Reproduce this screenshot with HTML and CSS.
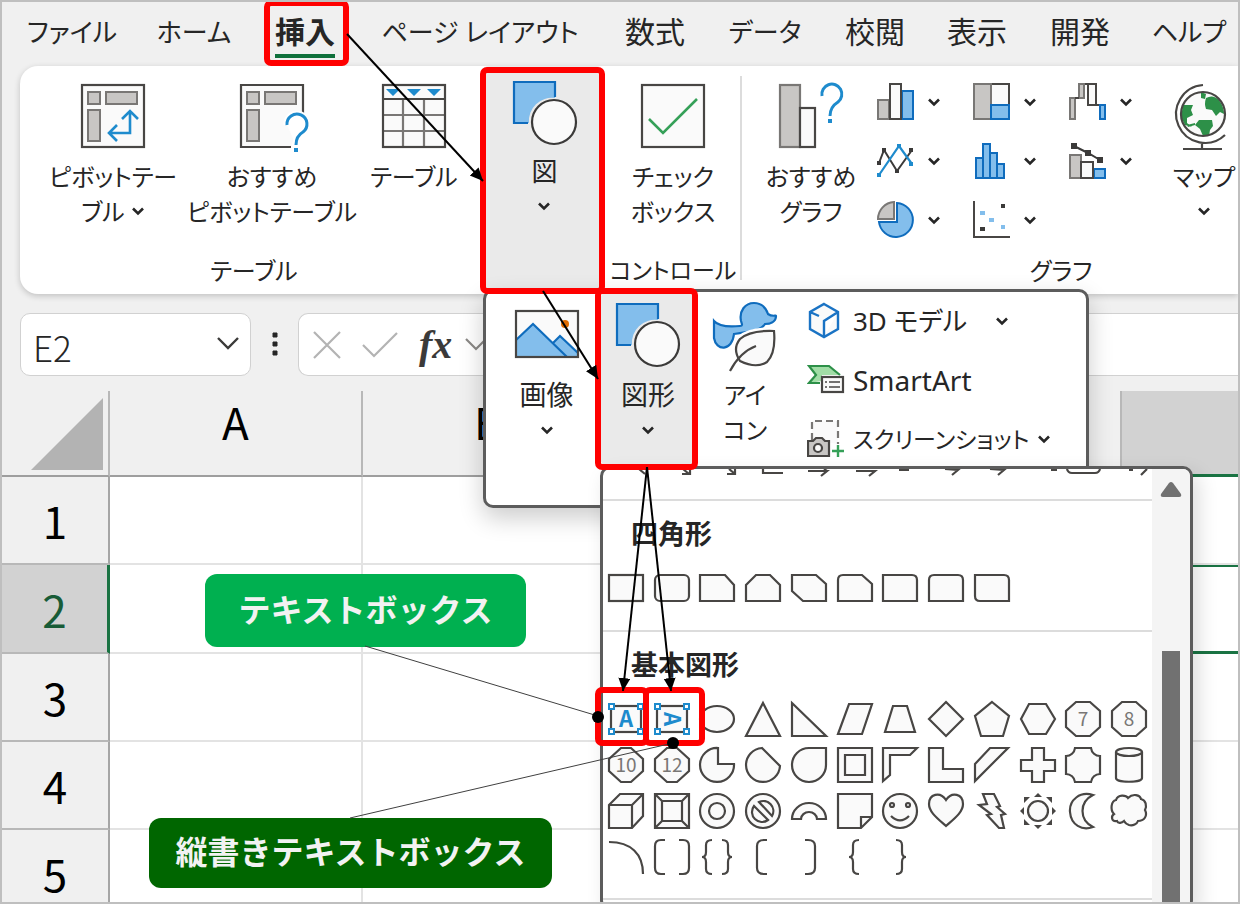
FILE: index.html
```html
<!DOCTYPE html>
<html lang="ja">
<head>
<meta charset="utf-8">
<title>テキストボックスの挿入</title>
<link rel="stylesheet" href="styles.css">
</head>
<body>
<svg class="defs" aria-hidden="true">
  <symbol id="chev" viewBox="0 0 14 10"><path d="M2 2.500 7 7.500 12 2.500" fill="none" stroke="#262626" stroke-width="2.600"/></symbol>
  <symbol id="shapes" viewBox="0 0 66 66">
    <path d="M2 2H43V18A23 23 0 0 0 17 43H2Z" fill="#83beec"/>
    <path d="M43 17V2H2V43H16" fill="none" stroke="#0f6cbd" stroke-width="2.200"/>
    <circle cx="42" cy="42" r="22" fill="#fafafa" stroke="#3b3a39" stroke-width="2.200"/>
  </symbol>
</svg>
<div class="app">
  <nav class="tabs">
    <a href="#" class="kana">ファイル</a><a href="#" class="kana">ホーム</a><a href="#" class="on"><span>挿入</span></a><a href="#" class="kana">ページ レイアウト</a><a href="#">数式</a><a href="#" class="kana">データ</a><a href="#">校閲</a><a href="#">表示</a><a href="#">開発</a><a href="#" class="kana">ヘルプ</a>
  </nav>

  <section class="ribbon">
    <div class="group g-table">
      <div class="items">
        <button class="big w-pivot">
          <svg width="66" height="68" viewBox="0 0 66 68"><rect x="2" y="2" width="62" height="62" fill="#fafafa" stroke="#484644" stroke-width="2.200"/><g fill="#c8c6c4" stroke="#797775" stroke-width="2"><rect x="8" y="9" width="12" height="12"/><rect x="26" y="9" width="31" height="12"/><rect x="8" y="27" width="12" height="31"/></g><path d="M50 28V50H30M42 36 50 28 58 36M37 42 29 50 37 58" fill="none" stroke="#1e8bcd" stroke-width="2.600"/></svg>
          <span>ピボットテー<br>ブル <svg class="chev"><use href="#chev"/></svg></span>
        </button>
        <button class="big w-rec">
          <svg width="66" height="72" viewBox="0 0 66 72"><path d="M64 30V2H2V64H52" fill="#fafafa" stroke="#484644" stroke-width="2.200"/><g fill="#c8c6c4" stroke="#797775" stroke-width="2"><rect x="8" y="9" width="12" height="12"/><rect x="26" y="9" width="31" height="12"/><rect x="8" y="27" width="12" height="31"/></g><path d="M48 42A10 10 0 1 1 64 49Q57 53 57 62" fill="#fff" stroke="#fff" stroke-width="7"/><path d="M48 42A10 10 0 1 1 64 49Q57 53 57 62" fill="none" stroke="#1e8bcd" stroke-width="3"/><rect x="55" y="65" width="4" height="4" fill="#1e8bcd"/></svg>
          <span>おすすめ<br>ピボットテーブル</span>
        </button>
        <button class="big w-tbl">
          <svg width="66" height="68" viewBox="0 0 66 68"><rect x="2" y="2" width="62" height="62" fill="#fafafa"/><path d="M22 16V64M43 16V64M2 32H64M2 48H64" stroke="#797775" stroke-width="2.200"/><path d="M2 16H64" stroke="#484644" stroke-width="2"/><rect x="2" y="2" width="62" height="62" fill="none" stroke="#484644" stroke-width="2.200"/><path d="M5 6H19L12 13ZM26 6H40L33 13ZM46 6H60L53 13Z" fill="#1e8bcd"/></svg>
          <span>テーブル</span>
        </button>
      </div>
      <h2>テーブル</h2>
    </div>
    <div class="group g-fig">
      <button class="big raised">
        <svg width="66" height="66"><use href="#shapes"/></svg>
        <span>図<br><svg class="chev"><use href="#chev"/></svg></span>
      </button>
    </div>
    <div class="group g-ctl">
      <div class="items">
        <button class="big">
          <svg width="66" height="68" viewBox="0 0 66 68"><rect x="2" y="2" width="62" height="62" fill="#fafafa" stroke="#484644" stroke-width="2.200"/><path d="M9 36 23 50 57 16" fill="none" stroke="#35a058" stroke-width="2.600"/></svg>
          <span>チェック<br>ボックス</span>
        </button>
      </div>
      <h2>コントロール</h2>
    </div>
    <div class="group g-chart">
      <div class="items">
        <button class="big w-graph">
          <svg width="66" height="68" viewBox="0 0 66 68"><rect x="2" y="2" width="20" height="62" fill="#c8c6c4" stroke="#797775" stroke-width="2.200"/><rect x="22" y="25" width="15" height="39" fill="#fafafa" stroke="#484644" stroke-width="2.200"/><path d="M44 13A10 10 0 1 1 60 19Q52 24 52 33" fill="none" stroke="#1e8bcd" stroke-width="3"/><rect x="50" y="36" width="4" height="4" fill="#1e8bcd"/></svg>
          <span>おすすめ<br>グラフ</span>
        </button>
        <div class="minis">
          <button aria-label="棒グラフ"><svg width="38" height="38" viewBox="0 0 38 38"><rect x="1" y="17" width="11" height="19" fill="#c8c6c4" stroke="#797775" stroke-width="2"/><rect x="25" y="8" width="11" height="28" fill="#83beec" stroke="#0f6cbd" stroke-width="2"/><rect x="13" y="1" width="11" height="35" fill="#fafafa" stroke="#484644" stroke-width="2"/></svg><svg class="chev"><use href="#chev"/></svg></button>
          <button aria-label="階層グラフ"><svg width="38" height="38" viewBox="0 0 38 38"><rect x="18" y="1" width="18" height="21" fill="#fafafa" stroke="#484644" stroke-width="2"/><rect x="1" y="1" width="17" height="35" fill="#c8c6c4" stroke="#797775" stroke-width="2"/><rect x="18" y="22" width="18" height="14" fill="#83beec" stroke="#0f6cbd" stroke-width="2"/></svg><svg class="chev"><use href="#chev"/></svg></button>
          <button aria-label="ウォーターフォール図"><svg width="38" height="38" viewBox="0 0 38 38"><path d="M11 1H27" stroke="#484644" stroke-width="2"/><g fill="#c8c6c4" stroke="#797775" stroke-width="2"><rect x="1" y="15" width="5" height="21"/><rect x="10" y="1" width="5" height="14"/></g><rect x="19" y="1" width="8" height="21" fill="#fafafa" stroke="#484644" stroke-width="2"/><path d="M6 15H10M27 22H31" stroke="#484644" stroke-width="2"/><rect x="31" y="22" width="5" height="14" fill="#83beec" stroke="#0f6cbd" stroke-width="2"/></svg><svg class="chev"><use href="#chev"/></svg></button>
          <button aria-label="折れ線グラフ"><svg width="38" height="38" viewBox="0 0 38 38"><path d="M2 21 7 8 20 29 35 8" fill="none" stroke="#3b3a39" stroke-width="2"/><path d="M2 33 22 4 35 22" fill="none" stroke="#1e8bcd" stroke-width="2.200"/><path d="M0 19H4V23H0ZM5 6H9V10H5ZM18 27H22V31H18ZM32 6H36V10H32Z" fill="#3b3a39"/><path d="M0 31H4V35H0ZM20 2H24V6H20ZM32 20H36V24H32Z" fill="#1e8bcd"/></svg><svg class="chev"><use href="#chev"/></svg></button>
          <button aria-label="統計グラフ"><svg width="38" height="38" viewBox="0 0 38 38"><g fill="#83beec" stroke="#0f6cbd" stroke-width="2"><rect x="3" y="16" width="7" height="20"/><rect x="10" y="2" width="7" height="34"/><rect x="17" y="11" width="7" height="25"/><rect x="24" y="22" width="7" height="14"/></g></svg><svg class="chev"><use href="#chev"/></svg></button>
          <button aria-label="複合グラフ"><svg width="38" height="38" viewBox="0 0 38 38"><path d="M5 4 19 11 31 18" fill="none" stroke="#3b3a39" stroke-width="2"/><path d="M2 1H8V7H2ZM16 8H22V14H16ZM28 15H34V21H28Z" fill="#3b3a39"/><rect x="1" y="13" width="11" height="23" fill="#c8c6c4" stroke="#797775" stroke-width="2"/><rect x="25" y="27" width="11" height="9" fill="#83beec" stroke="#0f6cbd" stroke-width="2"/><rect x="12" y="20" width="12" height="16" fill="#fafafa" stroke="#484644" stroke-width="2"/></svg><svg class="chev"><use href="#chev"/></svg></button>
          <button aria-label="円グラフ"><svg width="38" height="38" viewBox="0 0 38 38"><path d="M20 2A17 17 0 1 1 2 21H20Z" fill="#83beec" stroke="#0f6cbd" stroke-width="2"/><path d="M17 1V18H1A17 17 0 0 1 17 1Z" fill="#c8c6c4" stroke="#797775" stroke-width="2"/></svg><svg class="chev"><use href="#chev"/></svg></button>
          <button aria-label="散布図"><svg width="38" height="38" viewBox="0 0 38 38"><path d="M1 0V36H37" fill="none" stroke="#484644" stroke-width="2"/><path d="M28 3H32V7H28ZM7 26H12V30H7Z" fill="#3b3a39"/><path d="M7 10H12V14H7ZM16 17H21V21H16ZM28 24H32V28H28Z" fill="#83beec"/></svg><svg class="chev"><use href="#chev"/></svg></button>
        </div>
        <button class="big w-map">
          <svg width="56" height="68" viewBox="5 0 56 68"><circle cx="32" cy="31" r="22" fill="#fafafa"/><path d="M35 15Q42 11 48 17Q53 24 53 31L49 29 45 33 41 27 35 26Q33 21 35 15ZM30 9 35 11 34 16 30 15ZM12 22 22 22 20 27 22 32 16 35 16 40 21 44 14 42 10 34ZM28 37H41L42 43 39 47 38 53H32L29 46 24 42ZM16 42 24 40 24 42 17 44Z" fill="#2d9048"/><circle cx="32" cy="31" r="22" fill="none" stroke="#484644" stroke-width="2.200"/><path d="M32 2A29 29 0 1 0 54 52M31 60V66M12 66H51" fill="none" stroke="#484644" stroke-width="2.200"/></svg>
          <span>マップ<br><svg class="chev"><use href="#chev"/></svg></span>
        </button>
      </div>
      <h2>グラフ</h2>
    </div>
  </section>

  <div class="fbar">
    <div class="namebox">
      <input type="text" value="E2" aria-label="名前ボックス">
      <button aria-label="一覧"><svg width="24" height="15" viewBox="0 0 24 15"><path d="M2 2 12 12 22 2" fill="none" stroke="#3b3a39" stroke-width="2.400"/></svg></button>
    </div>
    <svg class="dots" width="6" height="26" viewBox="0 0 6 26"><path d="M1 1H5V5H1ZM1 10H5V14H1ZM1 19H5V23H1Z" fill="#262626" stroke="#262626"/></svg>
    <div class="formula">
      <button aria-label="キャンセル"><svg width="28" height="28" viewBox="0 0 28 28"><path d="M1 1 27 27M27 1 1 27" stroke="#b3b3b3" stroke-width="2.200"/></svg></button>
      <button aria-label="入力"><svg width="38" height="28" viewBox="0 0 38 28"><path d="M2 14 13 25 36 2" fill="none" stroke="#b3b3b3" stroke-width="2.200"/></svg></button>
      <button class="fx">fx</button>
      <button aria-label="履歴"><svg width="24" height="15" viewBox="0 0 24 15"><path d="M2 2 12 12 22 2" fill="none" stroke="#8a8886" stroke-width="2.200"/></svg></button>
      <input type="text" aria-label="数式">
    </div>
  </div>

  <div class="sheet">
    <table>
      <colgroup><col class="c0"><col class="c"><col class="c"><col class="c"><col class="c"><col class="c"></colgroup>
      <thead><tr><th class="corner"><svg width="74" height="74" viewBox="0 0 74 74"><path d="M73 1V73H1Z" fill="#b3b3b3"/></svg></th><th>A</th><th>B</th><th></th><th></th><th class="sel"></th></tr></thead>
      <tbody>
        <tr><th>1</th><td></td><td></td><td></td><td></td><td></td></tr>
        <tr class="cur"><th>2</th><td></td><td></td><td></td><td></td><td class="act"></td></tr>
        <tr><th>3</th><td></td><td></td><td></td><td></td><td></td></tr>
        <tr><th>4</th><td></td><td></td><td></td><td></td><td></td></tr>
        <tr><th>5</th><td></td><td></td><td></td><td></td><td></td></tr>
      </tbody>
    </table>
  </div>

  <div class="menu">
    <button class="big w-img">
      <svg width="66" height="66" viewBox="0 0 66 66"><rect x="2" y="9" width="62" height="46" fill="#fafafa"/><circle cx="51" cy="22" r="4" fill="#e06c00"/><path d="M2 38 19 22 53 55H2Z" fill="#83beec"/><path d="M39 41 46 34 64 51V55H53Z" fill="#83beec"/><path d="M2 38 19 22 53 55M39 41 46 34 64 51" fill="none" stroke="#0f6cbd" stroke-width="2.200"/><rect x="2" y="9" width="62" height="46" fill="none" stroke="#484644" stroke-width="2.200"/></svg>
      <span>画像<br><svg class="chev"><use href="#chev"/></svg></span>
    </button>
    <button class="big raised w-shape">
      <svg width="66" height="66"><use href="#shapes"/></svg>
      <span>図形<br><svg class="chev"><use href="#chev"/></svg></span>
    </button>
    <button class="big w-icon">
      <svg width="66" height="70" viewBox="0 0 66 70"><path d="M2 19Q8 26 28 24C31 24 30 22 29 19 27 9 33 1 42 1 50 1 54 6 56 12 60 15 64 13 64 14 64 20 58 22 53 22 50 27 44 29 22 32 20 50 4 49 2 36Z" fill="#83beec" stroke="#0f6cbd" stroke-width="2.200"/><path d="M62 29Q64 51 55 60 44 67 28 59 20 47 28 37 38 28 62 29Z" fill="#fafafa" stroke="#fff" stroke-width="7"/><path d="M62 29Q64 51 55 60 44 67 28 59 20 47 28 37 38 28 62 29Z" fill="#fafafa" stroke="#484644" stroke-width="2.200"/><path d="M44 44Q28 50 18 69" fill="none" stroke="#484644" stroke-width="2.200"/></svg>
      <span>アイ<br>コン</span>
    </button>
    <div class="list">
      <button><svg width="38" height="38" viewBox="0 0 38 38"><path d="M17 2 31 10V27L17 35 3 27V10ZM3 10 12 14M31 10 17 19V35" fill="#fafafa" stroke="#1a73c4" stroke-width="2.400"/></svg><span>3D モデル</span><svg class="chev far"><use href="#chev"/></svg></button>
      <button class="latin"><svg width="38" height="38" viewBox="0 0 38 38"><path d="M2 5H22L33 14H15V20L2 22 9 14Z" fill="#a1dda6"/><path d="M33 14 22 5H2L9 14 2 22H13" fill="none" stroke="#2d9048" stroke-width="2.200"/><rect x="15" y="16" width="21" height="15" fill="#fafafa" stroke="#484644" stroke-width="2.200"/><path d="M18 21H20M22 21H33M18 26H20M22 26H33" stroke="#484644" stroke-width="1.600"/></svg><span>SmartArt</span></button>
      <button class="long"><svg width="38" height="38" viewBox="0 0 38 38"><path d="M5 20V1H31V24" fill="#fafafa" stroke="#797775" stroke-width="2.200" stroke-dasharray="7 4"/><path d="M1 21H6L9 18H15L18 21H22V36H1Z" fill="#c8c6c4" stroke="#484644" stroke-width="2.200"/><circle cx="11" cy="28" r="4" fill="#fafafa" stroke="#484644" stroke-width="2.200"/><path d="M31 25V37M25 31H37" stroke="#35a058" stroke-width="2.400"/></svg><span>スクリーンショット</span><svg class="chev"><use href="#chev"/></svg></button>
    </div>
  </div>

  <div class="gallery">
    <div class="pane">
      <svg class="cut" width="550" height="30" viewBox="0 0 550 30"><g fill="none" stroke="#484644" stroke-width="2.200"><path d="M36 0 42 5M79 5H87V0M80 0 86 5M124 5H132V0M126 0 132 5M160 0V4H180M205 2H224L218 7M224 2 221 0M253 2H272L266 7M296 1H306M342 0 355 1 349 6M387 0 401 1 395 6M448 1H454M464 0Q465 4 469 4H492Q496 4 497 0M526 1H530M538 6 544 0"/></g></svg>
      <h3>四角形</h3>
      <div class="grid one">
        <button><svg viewBox="-20 -20 40 40"><rect x="-17" y="-13" width="34" height="26"/></svg></button>
        <button><svg viewBox="-20 -20 40 40"><rect x="-17" y="-13" width="34" height="26" rx="5"/></svg></button>
        <button><svg viewBox="-20 -20 40 40"><path d="M-17-13H8L17-3V13H-17Z"/></svg></button>
        <button><svg viewBox="-20 -20 40 40"><path d="M-7-13H7L17-3V13H-17V-3Z"/></svg></button>
        <button><svg viewBox="-20 -20 40 40"><path d="M-17-13H7L17-4V13H-6L-17 3Z"/></svg></button>
        <button><svg viewBox="-20 -20 40 40"><path d="M-17 13V-8Q-17-13-12-13H7L17-4V13Z"/></svg></button>
        <button><svg viewBox="-20 -20 40 40"><path d="M-17-13H12Q17-13 17-8V13H-17Z"/></svg></button>
        <button><svg viewBox="-20 -20 40 40"><path d="M-17 13V-8Q-17-13-12-13H12Q17-13 17-8V13Z"/></svg></button>
        <button><svg viewBox="-20 -20 40 40"><path d="M-17-13H12Q17-13 17-8V13H-12Q-17 13-17 8Z"/></svg></button>
      </div>
      <h3>基本図形</h3>
      <div class="grid">
        <button><svg viewBox="-20 -20 40 40"><rect x="-15" y="-13" width="30" height="26"/><path class="h" d="M-17-15H-12V-10H-17ZM12-15H17V-10H12ZM-17 10H-12V15H-17ZM12 10H17V15H12Z"/><text class="a" y="8">A</text></svg></button>
        <button><svg viewBox="-20 -20 40 40"><rect x="-15" y="-13" width="30" height="26"/><path class="h" d="M-17-15H-12V-10H-17ZM12-15H17V-10H12ZM-17 10H-12V15H-17ZM12 10H17V15H12Z"/><text class="a" y="8" transform="rotate(90)">A</text></svg></button>
        <button><svg viewBox="-20 -20 40 40"><ellipse rx="17" ry="13"/></svg></button>
        <button><svg viewBox="-20 -20 40 40"><path d="M0-16 17 17H-17Z"/></svg></button>
        <button><svg viewBox="-20 -20 40 40"><path d="M-17-16 17 17H-17Z"/></svg></button>
        <button><svg viewBox="-20 -20 40 40"><path d="M-6-15H17L7 15H-17Z"/></svg></button>
        <button><svg viewBox="-20 -20 40 40"><path d="M-7-13H7L15 13H-15Z"/></svg></button>
        <button><svg viewBox="-20 -20 40 40"><path d="M0-17 17 0 0 17-17 0Z"/></svg></button>
        <button><svg viewBox="-20 -20 40 40"><path d="M0-17 17-3 11 17H-11L-17-3Z"/></svg></button>
        <button><svg viewBox="-20 -20 40 40"><path d="M-9-15H8L17 0 8 15H-9L-17 0Z"/></svg></button>
        <button><svg viewBox="-20 -20 40 40"><path d="M-7-17H7L17-8V8L7 17H-7L-17 8V-8Z"/><text y="7">7</text></svg></button>
        <button><svg viewBox="-20 -20 40 40"><path d="M-7-17H7L17-8V8L7 17H-7L-17 8V-8Z"/><text y="7">8</text></svg></button>

        <button><svg viewBox="-20 -20 40 40"><path d="M-5-17H5L17-6V6L5 17H-5L-17 6V-6Z"/><text y="7">10</text></svg></button>
        <button><svg viewBox="-20 -20 40 40"><path d="M-5-17H5L17-6V6L5 17H-5L-17 6V-6Z"/><text y="7">12</text></svg></button>
        <button><svg viewBox="-20 -20 40 40"><path d="M1-17V-1H17A17 17 0 1 1 1-17Z"/></svg></button>
        <button><svg viewBox="-20 -20 40 40"><path d="M-1-17 17 1A17 17 0 1 1-1-17Z"/></svg></button>
        <button><svg viewBox="-20 -20 40 40"><path d="M0-17H17V0A17 17 0 1 1 0-17Z"/></svg></button>
        <button><svg viewBox="-20 -20 40 40"><path d="M-17-17H17V17H-17Z"/><path d="M-10-10H10V10H-10Z"/></svg></button>
        <button><svg viewBox="-20 -20 40 40"><path d="M-17-17H17L10-10H-10V10L-17 16Z"/></svg></button>
        <button><svg viewBox="-20 -20 40 40"><path d="M-17-17H-3V4H17V17H-17Z"/></svg></button>
        <button><svg viewBox="-20 -20 40 40"><path d="M-17-1-2-17H16L-17 16Z"/></svg></button>
        <button><svg viewBox="-20 -20 40 40"><path d="M-6-17H6V-5H17V6H6V17H-6V6H-17V-5H-6Z"/></svg></button>
        <button><svg viewBox="-20 -20 40 40"><path d="M-8-17H8A9 9 0 0 0 17-9V9A9 9 0 0 0 8 17H-8A9 9 0 0 0-17 9V-9A9 9 0 0 0-8-17Z"/></svg></button>
        <button><svg viewBox="-20 -20 40 40"><path d="M-13-13V13C-13 18 13 18 13 13V-13"/><ellipse cy="-13" rx="13" ry="4"/></svg></button>

        <button><svg viewBox="-20 -20 40 40"><path d="M-17-6-6-17H17V5L6 17H-17ZM-17-6H6V17M6-6 17-17"/></svg></button>
        <button><svg viewBox="-20 -20 40 40"><path d="M-17-17H17V17H-17ZM-10-10H10V10H-10ZM-17-17-10-10M17-17 10-10M17 17 10 10M-17 17-10 10"/></svg></button>
        <button><svg viewBox="-20 -20 40 40"><circle r="17"/><circle r="8"/></svg></button>
        <button><svg viewBox="-20 -20 40 40"><circle r="17"/><path d="M-8-4 5 9A10 10 0 0 1-9-5ZM-4-9A10 10 0 0 1 9 5Z"/></svg></button>
        <button><svg viewBox="-20 -20 40 40"><path d="M-17 8A17 16 0 0 1 17 8H8A8 7 0 0 0-8 8Z"/></svg></button>
        <button><svg viewBox="-20 -20 40 40"><path d="M-17-17H17V6L6 17H-17ZM6 17V6H17"/></svg></button>
        <button><svg viewBox="-20 -20 40 40"><circle r="17"/><circle cx="-8" cy="-6" r="2"/><circle cx="8" cy="-6" r="2"/><path d="M-9 5Q0 14 9 5"/></svg></button>
        <button><svg viewBox="-20 -20 40 40"><path d="M0-11C6-20 17-17 17-7 17 1 9 7 0 15-9 7-17 1-17-7-17-17-6-20 0-11Z"/></svg></button>
        <button><svg viewBox="-20 -20 40 40"><path d="M-9-17H2L8-5 5-4 13 3 9 4 12 17 7 17-5 4-1 3-13-6-5-7Z"/></svg></button>
        <button><svg viewBox="-20 -20 40 40"><circle r="10"/><path class="k" d="M0-18 4-14H-4ZM0 18 4 14H-4ZM-18 0-14-4V4ZM18 0 14-4V4ZM-14-14H-8L-14-8ZM14-14H8L14-8ZM-14 14H-8L-14 8ZM14 14H8L14 8Z"/></svg></button>
        <button><svg viewBox="-20 -20 40 40"><path d="M10-16C-3-20-14-11-13 1-12 14-1 20 10 16-4 9-4-9 10-16Z"/></svg></button>
        <button><svg viewBox="-20 -20 40 40"><path d="M-15 3C-19-1-18-10-13-11-11-17-3-16-1-13 4-18 11-16 12-12 17-11 18-5 16-1 19 5 15 10 9 10 8 13 4 15 0 14-3 13-4 12-5 10-7 12-11 13-12 10-18 11-18 5-15 3Z"/></svg></button>

        <button><svg viewBox="-20 -20 40 40"><path class="n" d="M-17-15C5-15 17-3 17 17"/></svg></button>
        <button><svg viewBox="-20 -20 40 40"><path class="n" d="M-7-17H-11Q-17-17-17-11V11Q-17 17-11 17H-7M7-17H11Q17-17 17-11V11Q17 17 11 17H7"/></svg></button>
        <button><svg viewBox="-20 -20 40 40"><path class="n" d="M-5-17Q-11-17-11-12V-5Q-11 0-15 0-11 0-11 5V12Q-11 17-5 17M5-17Q11-17 11-12V-5Q11 0 15 0 11 0 11 5V12Q11 17 5 17"/></svg></button>
        <button><svg viewBox="-20 -20 40 40"><path class="n" d="M4-17H1Q-6-17-6-11V11Q-6 17 1 17H4"/></svg></button>
        <button><svg viewBox="-20 -20 40 40"><path class="n" d="M-4-17H-1Q6-17 6-11V11Q6 17-1 17H-4"/></svg></button>
        <button><svg viewBox="-20 -20 40 40"><path class="n" d="M4-17Q-2-17-2-12V-5Q-2 0-6 0-2 0-2 5V12Q-2 17 4 17"/></svg></button>
        <button><svg viewBox="-20 -20 40 40"><path class="n" d="M-4-17Q2-17 2-12V-5Q2 0 6 0 2 0 2 5V12Q2 17-4 17"/></svg></button>
      </div>
      <hr>
    </div>
    <div class="scroll">
      <svg width="22" height="17" viewBox="0 0 22 17"><path d="M9 2Q11 0 13 2L21 13Q22 16 19 16H3Q0 16 1 13Z" fill="#717171"/></svg>
      <div class="thumb"></div>
    </div>
  </div>

  <div class="mark m-tab"></div>
  <div class="mark m-fig"></div>
  <div class="mark m-shape"></div>
  <div class="mark m-h"></div>
  <div class="mark m-v"></div>
  <div class="callout co-h">テキストボックス</div>
  <div class="callout co-v">縦書きテキストボックス</div>
  <svg class="arrows" width="1240" height="904" viewBox="0 0 1240 904">
    <defs><marker id="head" markerUnits="userSpaceOnUse" markerWidth="14" markerHeight="14" refX="13" refY="6" orient="auto"><path d="M0 0 13 6 0 12Z"/></marker></defs>
    <g stroke="#000" stroke-width="2" marker-end="url(#head)"><path d="M347 34 483 181"/><path d="M543 291 598 379"/><path d="M647 467 623 691"/><path d="M647 467 671 691"/></g>
    <path d="M365 646 598 716M350 818 673 743" stroke="#404040"/>
    <circle cx="598" cy="717" r="6"/><circle cx="673" cy="743" r="6"/>
  </svg>
</div>
</body>
</html>
```
FILE: styles.css
```css
* { box-sizing: border-box; }
body {
  margin: 0;
  font-family: "Noto Sans", "Noto Sans CJK JP", sans-serif;
  font-feature-settings: "palt";
  color: #262626;
}
button, input { font: inherit; font-feature-settings: inherit; color: inherit; background: none; border: 0; padding: 0; margin: 0; }
h2, h3 { margin: 0; }
.defs { position: absolute; width: 0; height: 0; }
.app {
  position: relative;
  display: flex;
  flex-direction: column;
  height: 100vh;
  overflow: hidden;
  background: #f0f0f0;
  border: 2px solid #bfbfbf;
}

.tabs {
  display: grid;
  grid-template-columns: 140fr 104fr 118fr 232fr 118fr 102fr 118fr 86fr 120fr 98fr;
  height: 64px;
  flex: none;
  font-size: 30px;
  line-height: 60px;
}
.tabs a { display: flex; justify-content: center; white-space: nowrap; color: #262626; text-decoration: none; min-width: 0; }
.tabs a.kana { font-size: 26px; }
.tabs a.on { font-weight: 700; }
.tabs .on span { height: 56px; border-bottom: 4px solid #0f703b; }

.ribbon {
  display: flex;
  flex: none;
  height: 228px;
  margin-left: 18px;
  background: #fff;
  border-radius: 18px 0 0 18px;
  box-shadow: 0 2px 6px #0003;
  font-size: 24px;
  line-height: 35px;
}
.group { display: flex; flex-direction: column; flex: none; }
.group h2 { font-size: 24px; font-weight: 400; text-align: center; white-space: nowrap; line-height: 35px; padding-bottom: 6px; height: 41px; }
.items { display: flex; flex: 1; padding-top: 17px; }
.g-table { width: 461px; padding-left: 20px; }
.g-fig { width: 123px; }
.g-ctl { width: 138px; position: relative; }
.g-ctl::after { content: ""; position: absolute; right: 0; top: 10px; bottom: 14px; width: 2px; background: #dcdcdc; }
.ribbon .g-chart { flex: 1; min-width: 0; }
.g-chart h2 { padding-left: 142px; }
.g-table h2 { padding-right: 13px; }
.g-ctl h2 { font-size: 23px; }
.big { display: flex; flex-direction: column; align-items: center; white-space: nowrap; text-align: center; flex: none; }
.big > svg { flex: none; overflow: visible; }
.big > span { display: block; }
.chev { width: 14px; height: 10px; flex: none; vertical-align: 5px; }
.items .big { height: 160px; justify-content: space-between; }
.items .big > span { height: 86px; padding-top: 2px; }
.w-pivot { width: 146px; }
.w-rec { width: 172px; }
.w-tbl { width: 112px; }
.g-ctl .big { width: 100%; }
.raised { background: #eaeaea; border-radius: 8px; }
.g-fig .big { height: 100%; padding: 14px 0 0 4px; font-size: 26px; }
.g-fig .big > span { padding-top: 8px; }
.w-graph { width: 128px; padding-left: 10px; }
.minis { display: grid; grid-template-columns: repeat(3, 96px); grid-auto-rows: 38px; row-gap: 21px; padding-left: 7px; align-content: start; }
.minis button { display: flex; align-items: center; gap: 12px; height: 38px; }
.w-map { width: 78px; }

.fbar { display: flex; align-items: center; flex: none; padding: 19px 0 15px 18px; }
.namebox, .formula { display: flex; align-items: center; height: 63px; background: #fff; border: 1px solid #d1d1d1; border-radius: 10px; }
.namebox { width: 231px; padding: 0 10px 0 12px; }
.namebox input { width: 100%; min-width: 0; font-family: "Noto Sans CJK JP", sans-serif; font-weight: 300; font-size: 35px; height: 60px; padding-top: 4px; }
.dots { margin: 0 20px 0 21px; }
.formula { flex: 1; border-right: 0; border-radius: 10px 0 0 10px; padding-left: 14px; gap: 20px; }
.formula input { flex: 1; min-width: 0; height: 60px; }
.formula button { flex: none; display: flex; }
.formula .fx { font-family: "Liberation Serif", serif; font-style: italic; font-weight: 700; font-size: 40px; line-height: 56px; color: #3b3a39; }
.formula .fx + button { margin-left: -8px; }

.sheet { flex: 1; overflow: hidden; min-height: 0; font-family: "Noto Sans CJK JP", sans-serif; font-size: 44px; line-height: 60px; }
table { border-collapse: separate; border-spacing: 0; table-layout: fixed; width: 1373px; }
.c0 { width: 108px; }
.c { width: 253px; }
th { font-weight: 400; color: #000; padding: 0; }
thead th { height: 86px; border-right: 2px solid #b8b8b8; border-bottom: 2px solid #9e9e9e; vertical-align: top; }
thead .sel { background: #d2d2d2; border-bottom: 3px solid #1a7343; }
.corner svg { display: block; margin: 6px 4px 0 auto; }
tbody th { height: 88px; border-right: 2px solid #a6a6a6; border-bottom: 2px solid #b8b8b8; }
td { background: #fff; border-right: 2px solid #e3e3e3; border-bottom: 2px solid #e3e3e3; }
.cur th { background: #d2d2d2; color: #185c37; border-right: 3px solid #1a7343; height: 89px; }
.cur .act { border-top: 2px solid #1a7343; border-bottom: 3px solid #1a7343; }

.menu {
  position: absolute;
  left: 481px;
  top: 287px;
  width: 606px;
  height: 219px;
  display: flex;
  align-items: flex-start;
  padding-left: 7px;
  background: #fff;
  border: 3px solid #5c5c5c;
  border-radius: 10px;
  box-shadow: 0 10px 24px #0003;
  font-size: 27px;
  line-height: 35px;
}
.menu .big { padding-top: 10px; height: 174px; }
.menu .big > span { padding-top: 9px; }
.w-img { width: 107px; }
.w-shape { width: 96px; }
.w-icon { width: 98px; }
.menu .w-icon > span { padding-top: 5px; font-size: 24px; }
.list { display: flex; flex-direction: column; gap: 21px; padding: 10px 0 0 13px; }
.list button { display: flex; align-items: center; gap: 8px; height: 38px; white-space: nowrap; font-size: 26px; }
.list .latin { font-size: 28px; }
.list .long { font-size: 23px; }
.far { margin-left: 20px; }

.gallery {
  position: absolute;
  left: 598px;
  top: 464px;
  bottom: -8px;
  width: 593px;
  display: flex;
  background: #fff;
  border: 3px solid #5c5c5c;
  border-radius: 10px;
  box-shadow: 6px 8px 20px #0002;
  overflow: hidden;
}
.pane { flex: 1; min-width: 0; }
.cut { display: block; }
.pane h3 { height: 66px; line-height: 66px; padding-left: 28px; border-top: 2px solid #dcdcdc; font-size: 27px; }
.grid { display: grid; grid-template-columns: repeat(12, 1fr); grid-auto-rows: 46px; }
.grid.one { height: 65px; }
.grid button { display: flex; align-items: center; justify-content: center; }
.grid svg { width: 40px; height: 40px; flex: none; fill: #fafafa; stroke: #484644; stroke-width: 2.2; }
.grid .n { fill: none; }
.grid .h { fill: #fff; stroke: #1e8bcd; stroke-width: 2; }
.grid .k { fill: #484644; stroke: none; }
.grid text { font-size: 19px; text-anchor: middle; fill: #797775; stroke: none; font-family: "Noto Sans CJK JP", sans-serif; }
.grid .a { font-size: 22px; font-weight: 700; fill: #1e8bcd; }
hr { border: 0; border-top: 2px solid #dcdcdc; margin: 18px 0 0; }
.scroll { width: 38px; background: #f4f4f4; display: flex; flex-direction: column; align-items: center; padding-top: 12px; gap: 153px; }
.thumb { width: 18px; flex: 1; background: #717171; }

.mark { position: absolute; border: 6px solid #f00; border-radius: 7px; }
.m-tab { left: 262px; top: -2px; width: 85px; height: 66px; }
.m-fig { left: 478px; top: 65px; width: 125px; height: 227px; }
.m-shape { left: 593px; top: 286px; width: 103px; height: 182px; }
.m-h { left: 593px; top: 685px; width: 54px; height: 59px; }
.m-v { left: 641px; top: 685px; width: 62px; height: 59px; }
.callout { position: absolute; display: flex; align-items: center; justify-content: center; color: #f2f2f2; font-weight: 700; font-size: 32px; font-feature-settings: normal; border-radius: 12px; white-space: nowrap; padding-bottom: 6px; }
.co-h { left: 203px; top: 572px; width: 321px; height: 73px; background: #00b050; }
.co-v { left: 147px; top: 816px; width: 403px; height: 70px; background: #006600; }
.arrows { position: absolute; left: -2px; top: -2px; }
```
